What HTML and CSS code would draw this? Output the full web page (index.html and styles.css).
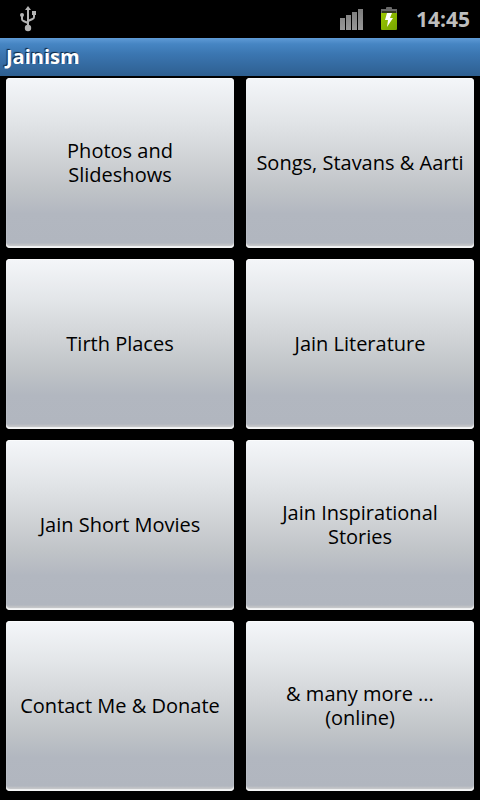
FILE: index.html
```html
<!DOCTYPE html>
<html lang="en">
<head>
<meta charset="utf-8">
<meta name="viewport" content="width=device-width, initial-scale=1">
<title>Jainism</title>
<link rel="stylesheet" href="styles.css">
</head>
<body>
<div class="status">
  <svg class="usb" width="20" height="28" viewBox="0 0 20 28" aria-hidden="true">
    <g fill="none" stroke="#b4b4b4" stroke-width="2">
      <path d="M10 4V24"/>
      <path d="M4 11V14Q4 15.500 5.500 16L10 18"/>
      <path d="M16 9V12Q16 13.500 14.500 14L10 16"/>
    </g>
    <g fill="#b4b4b4">
      <path d="M10 1L13 5H7Z"/>
      <circle cx="4" cy="10" r="2"/>
      <path d="M14 6H18V10H14Z"/>
      <circle cx="10" cy="23" r="3.200"/>
    </g>
  </svg>
  <svg class="signal" width="24" height="22" viewBox="0 0 24 22" aria-hidden="true">
    <defs>
      <linearGradient id="bars" x1="0" y1="0" x2="0" y2="1">
        <stop offset="0" stop-color="#7c7c7c"/><stop offset="1" stop-color="#989898"/>
      </linearGradient>
    </defs>
    <path fill="url(#bars)" d="M0 10H5V22H0ZM6 7H11V22H6ZM12 4H17V22H12ZM18 1H23V22H18Z"/>
  </svg>
  <svg class="battery" width="18" height="24" viewBox="0 0 18 24" aria-hidden="true">
    <defs>
      <linearGradient id="charge" x1="0" y1="0" x2="1" y2="1">
        <stop offset="0" stop-color="#9cc800"/><stop offset="1" stop-color="#75a300"/>
      </linearGradient>
    </defs>
    <path fill="#696969" d="M6 1Q6 0 7 0H11Q12 0 12 1V2H17V6H1V2H6Z"/>
    <path fill="#343a20" d="M2 4H16V6H2Z"/>
    <path fill="url(#charge)" d="M1 6H17V22Q17 23 16 23H2Q1 23 1 22Z"/>
    <path fill="#fff" d="M7 6H12L10 11H13L7 20L8 13H5Z"/>
  </svg>
  <time class="clock">14:45</time>
</div>
<header class="title"><h1>Jainism</h1></header>
<main class="menu">
  <button type="button">Photos and Slideshows</button>
  <button type="button">Songs, Stavans &amp; Aarti</button>
  <button type="button">Tirth Places</button>
  <button type="button">Jain Literature</button>
  <button type="button">Jain Short Movies</button>
  <button type="button">Jain Inspirational Stories</button>
  <button type="button">Contact Me &amp; Donate</button>
  <button type="button">&amp; many more ... (online)</button>
</main>
</body>
</html>
```
FILE: styles.css
```css
* { box-sizing: border-box; }

body {
  margin: 0;
  min-height: 100vh;
  display: flex;
  flex-direction: column;
  background: #000;
  font-family: "Open Sans", "Noto Sans", sans-serif;
}

.status {
  height: 38px;
  padding: 0 10px 0 18px;
  display: flex;
  align-items: center;
  color: #bebebe;
}

.signal { margin-left: auto; }
.battery { margin: 0 18px 0 16px; }

.clock {
  font-size: 21px;
  font-weight: 700;
  line-height: 24px;
}

.title {
  height: 38px;
  padding: 0 6px;
  display: flex;
  align-items: center;
  background: linear-gradient(#5f9bd6 0, #4685c3 6px, #3b76b1 16px, #2e5f90 100%);
}

.title h1 {
  margin: 0;
  color: #fff;
  font-size: 20px;
  line-height: 24px;
  font-weight: 700;
  text-shadow: -1px -1px 1px #10243a;
}

.menu {
  flex: 1;
  display: grid;
  grid-template-columns: 1fr 1fr;
  grid-auto-rows: 1fr;
  gap: 11px 12px;
  padding: 2px 6px 9px;
}

.menu button {
  min-width: 0;
  border: 0;
  border-radius: 4px;
  padding: 0 9px;
  background: linear-gradient(#f4f6f9 0, #e2e5e8 25%, #cfd2d5 48%, #bfc3c7 66%, #b2b7c0 80%, #b1b6bf 97%, #bfc1c5 98%);
  box-shadow: inset 0 -2px 1px #f4f5f6, inset 0 1px 0 #fafbfc;
  color: #000;
  font-family: inherit;
  font-size: 20px;
  line-height: 24px;
}
```
